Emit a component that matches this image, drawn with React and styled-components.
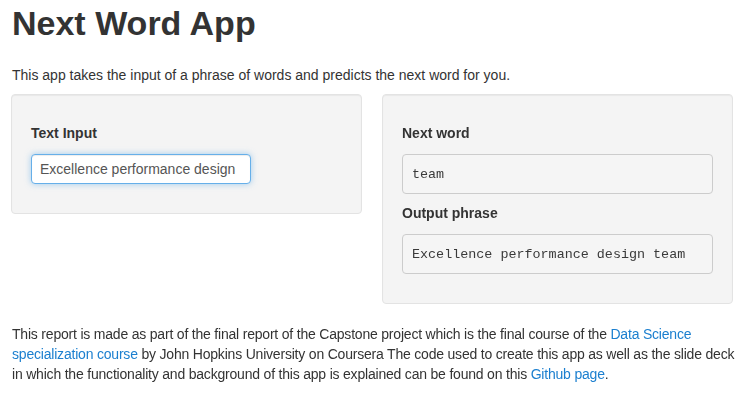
import React from 'react'
import styled, { createGlobalStyle } from 'styled-components'

const GlobalStyle = createGlobalStyle`
  body {
    margin: 0;
    background: #fff;
    font-family: "Liberation Sans", Arial, sans-serif;
    font-size: 14px;
    line-height: 1.42857;
    color: #333;
  }
`

const Page = styled.div`
  padding: 0 14px 0 11px;
`

const Title = styled.h1`
  margin: 5px 0 0 1px;
  font-size: 34px;
  font-weight: 700;
  line-height: 1.1;
  color: #333;
`

const Intro = styled.p`
  margin: 24px 0 8px 1px;
`

const Columns = styled.div`
  display: grid;
  grid-template-columns: 1fr 1fr;
  column-gap: 20px;
  align-items: start;
`

const Well = styled.div`
  background: #f4f4f4;
  border: 1px solid #e3e3e3;
  border-radius: 4px;
  padding: 19px;
  box-shadow: inset 0 1px 1px rgba(0, 0, 0, 0.05);
`

const Group = styled.div`
  margin: 10px 0 10px;
  & + & {
    margin-top: 0;
  }
`

const Label = styled.label`
  display: block;
  font-weight: 700;
  margin: 0 0 10px;
`

const Input = styled.input`
  box-sizing: border-box;
  display: block;
  width: 220px;
  height: 30px;
  padding: 4px 8px;
  font-family: inherit;
  font-size: 14px;
  color: #555;
  background: #fff;
  border: 1px solid #66afe9;
  border-radius: 4px;
  outline: 0;
  box-shadow: inset 0 1px 1px rgba(0, 0, 0, 0.075), 0 0 6px rgba(102, 175, 233, 0.6);
`

const Pre = styled.pre`
  margin: 0;
  padding: 9.5px 9px;
  font-family: "Liberation Mono", "Courier New", monospace;
  font-size: 13.4px;
  line-height: 19px;
  color: #3a3a3a;
  background: #f5f5f5;
  border: 1px solid #ccc;
  border-radius: 4px;
`

const Footer = styled.p`
  margin: 20px -6px 0 1px;
  line-height: 20px;
  letter-spacing: -0.2px;
`

const A = styled.a`
  color: #1b7fcf;
  text-decoration: none;
`

export default function App() {
  return (
    <>
      <GlobalStyle />
      <Page>
        <Title>Next Word App</Title>
        <Intro>This app takes the input of a phrase of words and predicts the next word for you.</Intro>
        <Columns>
          <Well>
            <Group>
              <Label>Text Input</Label>
              <Input defaultValue="Excellence performance design" autoFocus />
            </Group>
          </Well>
          <Well>
            <Group>
              <Label>Next word</Label>
              <Pre>team</Pre>
            </Group>
            <Group>
              <Label>Output phrase</Label>
              <Pre>Excellence performance design team</Pre>
            </Group>
          </Well>
        </Columns>
        <Footer>
          This report is made as part of the final report of the Capstone project which is the final course of the{' '}
          <A href="#">Data Science specialization course</A> by John Hopkins University on Coursera The code used to
          create this app as well as the slide deck in which the functionality and background of this app is explained
          can be found on this <A href="#">Github page</A>.
        </Footer>
      </Page>
    </>
  )
}
